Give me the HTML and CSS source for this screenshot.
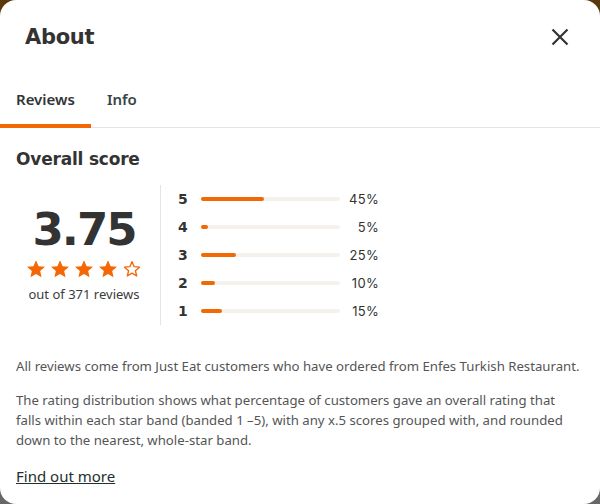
FILE: index.html
```html
<!DOCTYPE html>
<html>
<head>
    <meta charset="utf-8">
    <title>About - Reviews</title>
    <link rel="stylesheet" href="styles.css">
</head>
<body>
<div class="modal">
    <div class="modal-header">
        <h2 class="modal-title">About</h2>
        <button class="close-btn" aria-label="Close">
            <svg width="18" height="18" viewBox="0 0 18 18">
                <path d="M1.5 1.5 L16.5 16.5 M16.5 1.5 L1.5 16.5" stroke="#333" stroke-width="2.2" fill="none"/>
            </svg>
        </button>
    </div>

    <ul class="tabs">
        <li class="tab active">Reviews</li>
        <li class="tab">Info</li>
    </ul>

    <div class="content">
        <h3 class="section-title">Overall score</h3>

        <div class="score">
            <div class="score-summary">
                <div class="score-value">3.75</div>
                <div class="stars">
                    <svg viewBox="0 0 24 24"><path class="star-full" d="M12 1.5l3.1 7.1 7.7.7-5.8 5.1 1.7 7.6L12 18l-6.7 4 1.7-7.6-5.8-5.1 7.7-.7z"/></svg>
                    <svg viewBox="0 0 24 24"><path class="star-full" d="M12 1.5l3.1 7.1 7.7.7-5.8 5.1 1.7 7.6L12 18l-6.7 4 1.7-7.6-5.8-5.1 7.7-.7z"/></svg>
                    <svg viewBox="0 0 24 24"><path class="star-full" d="M12 1.5l3.1 7.1 7.7.7-5.8 5.1 1.7 7.6L12 18l-6.7 4 1.7-7.6-5.8-5.1 7.7-.7z"/></svg>
                    <svg viewBox="0 0 24 24"><path class="star-full" d="M12 1.5l3.1 7.1 7.7.7-5.8 5.1 1.7 7.6L12 18l-6.7 4 1.7-7.6-5.8-5.1 7.7-.7z"/></svg>
                    <svg viewBox="0 0 24 24"><path class="star-empty" d="M12 3.2l2.6 6 6.4.6-4.9 4.3 1.5 6.3L12 17l-5.6 3.4 1.5-6.3-4.9-4.3 6.4-.6z"/></svg>
                </div>
                <div class="score-count">out of 371 reviews</div>
            </div>

            <ul class="bars">
                <li class="bar-row">
                    <span class="bar-label">5</span>
                    <span class="bar-track"><span class="bar-fill" style="width: 45%"></span></span>
                    <span class="bar-pct">45%</span>
                </li>
                <li class="bar-row">
                    <span class="bar-label">4</span>
                    <span class="bar-track"><span class="bar-fill" style="width: 5%"></span></span>
                    <span class="bar-pct">5%</span>
                </li>
                <li class="bar-row">
                    <span class="bar-label">3</span>
                    <span class="bar-track"><span class="bar-fill" style="width: 25%"></span></span>
                    <span class="bar-pct">25%</span>
                </li>
                <li class="bar-row">
                    <span class="bar-label">2</span>
                    <span class="bar-track"><span class="bar-fill" style="width: 10%"></span></span>
                    <span class="bar-pct">10%</span>
                </li>
                <li class="bar-row">
                    <span class="bar-label">1</span>
                    <span class="bar-track"><span class="bar-fill" style="width: 15%"></span></span>
                    <span class="bar-pct">15%</span>
                </li>
            </ul>
        </div>

        <p class="note">All reviews come from Just Eat customers who have ordered from Enfes Turkish Restaurant.</p>
        <p class="note">The rating distribution shows what percentage of customers gave an overall rating that falls within each star band (banded 1 &ndash;5), with any x.5 scores grouped with, and rounded down to the nearest, whole-star band.</p>

        <a class="more-link" href="#">Find out more</a>
    </div>
</div>
</body>
</html>
```

FILE: styles.css
```css
html, body {
    margin: 0;
    height: 100%;
}
body {
    background: linear-gradient(#5a3a0c 0%, #5a3a0c 30%, #676767 70%, #676767 100%);
    font-family: "Noto Sans", "Open Sans", sans-serif;
    color: #242e30;
}
.modal {
    width: 600px;
    height: 504px;
    background: #fff;
    border-radius: 16px;
    overflow: hidden;
}
.modal-header {
    display: flex;
    justify-content: space-between;
    align-items: center;
    padding: 22px 31px 0 25px;
}
.modal-title {
    margin: 0;
    font-family: "DejaVu Sans", sans-serif;
    font-weight: bold;
    font-size: 21px;
    line-height: 30px;
    color: #333;
    letter-spacing: -0.3px;
}
.close-btn {
    border: none;
    background: none;
    padding: 0;
    width: 18px;
    height: 18px;
    display: flex;
}
.tabs {
    list-style: none;
    margin: 37px 0 0;
    padding: 0;
    display: flex;
    border-bottom: 1px solid #e4e4e4;
}
.tab {
    padding: 0 16px 15px;
    margin-bottom: -1px;
    font-size: 15px;
    font-weight: 600;
    line-height: 20px;
    color: #3a4446;
    border-bottom: 4px solid transparent;
}
.tab.active {
    border-bottom-color: #f36805;
    color: #2f3537;
}
.content {
    padding: 0 16px;
}
.section-title {
    margin: 19px 0 0;
    font-family: "DejaVu Sans", sans-serif;
    font-weight: bold;
    font-size: 17px;
    line-height: 24px;
    color: #333;
    letter-spacing: -0.2px;
}
.score {
    display: flex;
    margin-top: 14px;
}
.score-summary {
    width: 136px;
    margin-right: 8px;
    display: flex;
    flex-direction: column;
    align-items: center;
    justify-content: center;
}
.score-value {
    font-family: "DejaVu Sans", sans-serif;
    font-weight: bold;
    font-size: 45px;
    line-height: 46px;
    letter-spacing: -2px;
    color: #333;
}
.stars {
    display: flex;
    gap: 4px;
    margin-top: 6px;
}
.stars svg {
    width: 20px;
    height: 20px;
}
.star-full {
    fill: #f36805;
}
.star-empty {
    fill: #fff;
    stroke: #f36805;
    stroke-width: 1.6;
    stroke-linejoin: round;
}
.score-count {
    margin-top: 6px;
    font-size: 13px;
    line-height: 18px;
    color: #3c3c3c;
}
.bars {
    list-style: none;
    margin: 0;
    padding: 0 0 0 17px;
    border-left: 1px solid #e4e4e4;
}
.bar-row {
    display: flex;
    align-items: center;
    height: 28px;
}
.bar-label {
    width: 23px;
    font-family: "DejaVu Sans", sans-serif;
    font-weight: bold;
    font-size: 14px;
    color: #333;
}
.bar-track {
    width: 139px;
    height: 4px;
    border-radius: 2px;
    background: #f5f2ee;
    display: flex;
}
.bar-fill {
    height: 4px;
    border-radius: 2px;
    background: #f36805;
}
.bar-pct {
    width: 39px;
    text-align: right;
    font-family: "Inter", sans-serif;
    font-size: 13px;
    color: #333;
    letter-spacing: 0.3px;
}
.note {
    max-width: 565px;
    margin: 31px 0 0;
    font-size: 13.2px;
    line-height: 20px;
    color: #555;
}
.note + .note {
    margin-top: 14px;
}
.more-link {
    display: inline-block;
    margin-top: 16px;
    font-size: 15px;
    line-height: 20px;
    color: #242e30;
    text-decoration: underline;
}
```
